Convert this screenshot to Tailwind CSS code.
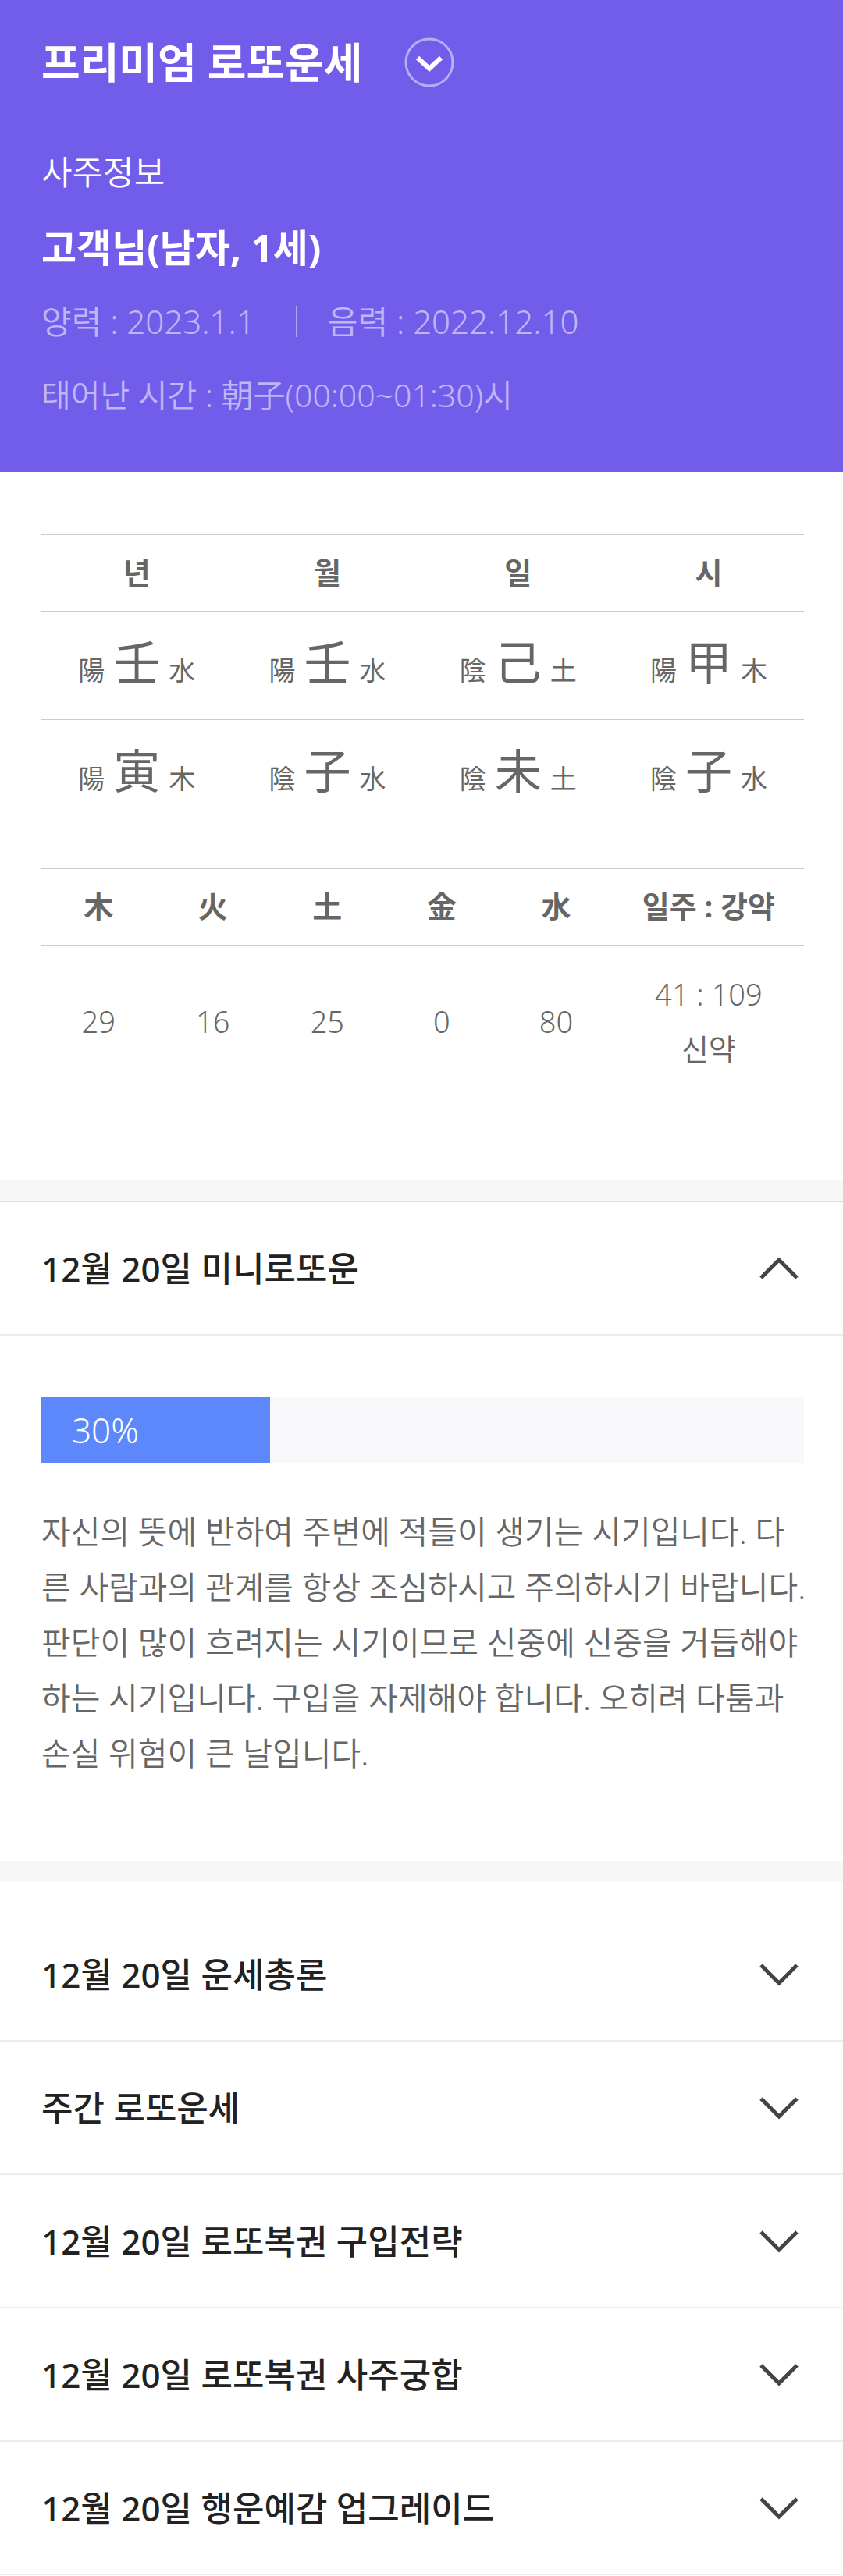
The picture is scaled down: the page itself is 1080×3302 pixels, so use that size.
<!DOCTYPE html>
<html lang="ko">
<head>
    <meta charset="UTF-8">
    <meta name="viewport" content="width=device-width, initial-scale=1.0">
    <title>프리미엄 로또운세</title>
    <script src="https://cdn.jsdelivr.net/npm/@tailwindcss/browser@4"></script>
    <style>
        body {
            font-family: 'Noto Sans', 'Noto Sans CJK KR', sans-serif;
        }
    </style>
</head>
<body class="bg-white text-[#666]">

    <header class="bg-[#715dea] text-white px-[53px] pt-11 pb-[52px]">
        <div class="flex items-center gap-[54px]">
            <h1 class="text-[54px] leading-[72px] font-bold">프리미엄 로또운세</h1>
            <button type="button" aria-label="메뉴 열기">
                <svg class="w-16 h-16" viewBox="0 0 64 64" fill="none" stroke="white">
                    <circle cx="32" cy="32" r="30" stroke-width="3" stroke-opacity="0.5"/>
                    <path d="M17 26 L32 40 L47 26" stroke-width="6"/>
                </svg>
            </button>
        </div>
        <h2 class="mt-[57px] text-[43px] leading-[96px] font-[350]">사주정보</h2>
        <p class="text-[49px] leading-[96px] font-bold">고객님(남자, 1세)</p>
        <div class="flex items-center text-[42px] leading-[94px] font-[350] text-white/55">
            <span>양력 : 2023.1.1</span>
            <span class="w-0.5 h-10 ml-[52px] mr-[39px] bg-white/45"></span>
            <span>음력 : 2022.12.10</span>
        </div>
        <p class="text-[41px] leading-[94px] font-[350] text-white/55">태어난 시간 : 朝子(00:00~01:30)시</p>
    </header>

    <main>
        <!-- 사주 표 -->
        <section class="pl-[53px] pr-[50px] pt-[79px] pb-[101px]">
            <table class="w-full table-fixed border-collapse text-center">
                <thead>
                    <tr class="h-[99px] border-y-2 border-[#ccc] text-[38px] leading-[70px]">
                        <th class="pb-1 font-bold">년</th>
                        <th class="pb-1 font-bold">월</th>
                        <th class="pb-1 font-bold">일</th>
                        <th class="pb-1 font-bold">시</th>
                    </tr>
                </thead>
                <tbody>
                    <tr class="h-[138px] border-b-2 border-[#ccc]">
                        <td class="pt-0.5"><div class="flex justify-center items-baseline gap-[11px] text-[34px] leading-[70px]"><span>陽</span><span class="text-[60px]">壬</span><span>水</span></div></td>
                        <td class="pt-0.5"><div class="flex justify-center items-baseline gap-[11px] text-[34px] leading-[70px]"><span>陽</span><span class="text-[60px]">壬</span><span>水</span></div></td>
                        <td class="pt-0.5"><div class="flex justify-center items-baseline gap-[11px] text-[34px] leading-[70px]"><span>陰</span><span class="text-[60px]">己</span><span>土</span></div></td>
                        <td class="pt-0.5"><div class="flex justify-center items-baseline gap-[11px] text-[34px] leading-[70px]"><span>陽</span><span class="text-[60px]">甲</span><span>木</span></div></td>
                    </tr>
                    <tr class="h-[138px]">
                        <td class="pt-0.5"><div class="flex justify-center items-baseline gap-[11px] text-[34px] leading-[70px]"><span>陽</span><span class="text-[60px]">寅</span><span>木</span></div></td>
                        <td class="pt-0.5"><div class="flex justify-center items-baseline gap-[11px] text-[34px] leading-[70px]"><span>陰</span><span class="text-[60px]">子</span><span>水</span></div></td>
                        <td class="pt-0.5"><div class="flex justify-center items-baseline gap-[11px] text-[34px] leading-[70px]"><span>陰</span><span class="text-[60px]">未</span><span>土</span></div></td>
                        <td class="pt-0.5"><div class="flex justify-center items-baseline gap-[11px] text-[34px] leading-[70px]"><span>陰</span><span class="text-[60px]">子</span><span>水</span></div></td>
                    </tr>
                </tbody>
            </table>

            <!-- 오행 점수 -->
            <table class="mt-[52px] w-full table-fixed border-collapse text-center text-[38px] leading-[70px]">
                <thead>
                    <tr class="h-[99px] border-y-2 border-[#ccc]">
                        <th class="w-[15%] pb-1 font-bold">木</th>
                        <th class="w-[15%] pb-1 font-bold">火</th>
                        <th class="w-[15%] pb-1 font-bold">土</th>
                        <th class="w-[15%] pb-1 font-bold">金</th>
                        <th class="w-[15%] pb-1 font-bold">水</th>
                        <th class="w-[25%] pb-1 font-bold">일주 : 강약</th>
                    </tr>
                </thead>
                <tbody class="font-[350]">
                    <tr class="h-[200px]">
                        <td class="pb-2">29</td>
                        <td class="pb-2">16</td>
                        <td class="pb-2">25</td>
                        <td class="pb-2">0</td>
                        <td class="pb-2">80</td>
                        <td class="pb-2">41 : 109<br>신약</td>
                    </tr>
                </tbody>
            </table>
        </section>

        <!-- 미니로또운 -->
        <section class="border-t-[26px] border-[#f7f7f7]">
            <h2 class="border-t-2 border-[#ddd]">
                <button type="button" aria-expanded="true" class="flex w-full h-[171px] items-center justify-between pl-[53px] pr-[50px] border-b-2 border-[#ededed] text-left text-[44px] leading-[70px] font-medium text-[#222]">
                    <span>12월 20일 미니로또운</span>
                    <svg class="w-16 h-16" viewBox="0 0 64 64" fill="none" stroke="#444" stroke-width="5"><path d="M9 44 L32 21 L55 44"/></svg>
                </button>
            </h2>
            <div class="pl-[53px] pr-[50px] pt-[79px] pb-[103px]">
                <div class="bg-[#f8f8fb]">
                    <div class="bg-[#5c88fb] pl-[39px] text-[44px] leading-[84px] font-[350] text-white" style="width: 30%">30%</div>
                </div>
                <p class="mt-[53px] -mr-2 text-[41px] leading-[71px] font-[350]">자신의 뜻에 반하여 주변에 적들이 생기는 시기입니다. 다른 사람과의 관계를 항상 조심하시고 주의하시기 바랍니다. 판단이 많이 흐려지는 시기이므로 신중에 신중을 거듭해야 하는 시기입니다. 구입을 자제해야 합니다. 오히려 다툼과 손실 위험이 큰 날입니다.</p>
            </div>
        </section>

        <!-- 운세 목록 -->
        <ul class="border-t-[26px] border-[#f7f7f7] pt-[34px] text-[44px] leading-[70px] font-medium text-[#222]">
            <li>
                <button type="button" aria-expanded="false" class="flex w-full h-[171px] items-center justify-between pl-[53px] pr-[50px] border-b-2 border-[#ededed] text-left">
                    <span>12월 20일 운세총론</span>
                    <svg class="w-16 h-16" viewBox="0 0 64 64" fill="none" stroke="#444" stroke-width="5"><path d="M9 20 L32 43 L55 20"/></svg>
                </button>
            </li>
            <li>
                <button type="button" aria-expanded="false" class="flex w-full h-[171px] items-center justify-between pl-[53px] pr-[50px] border-b-2 border-[#ededed] text-left">
                    <span>주간 로또운세</span>
                    <svg class="w-16 h-16" viewBox="0 0 64 64" fill="none" stroke="#444" stroke-width="5"><path d="M9 20 L32 43 L55 20"/></svg>
                </button>
            </li>
            <li>
                <button type="button" aria-expanded="false" class="flex w-full h-[171px] items-center justify-between pl-[53px] pr-[50px] border-b-2 border-[#ededed] text-left">
                    <span>12월 20일 로또복권 구입전략</span>
                    <svg class="w-16 h-16" viewBox="0 0 64 64" fill="none" stroke="#444" stroke-width="5"><path d="M9 20 L32 43 L55 20"/></svg>
                </button>
            </li>
            <li>
                <button type="button" aria-expanded="false" class="flex w-full h-[171px] items-center justify-between pl-[53px] pr-[50px] border-b-2 border-[#ededed] text-left">
                    <span>12월 20일 로또복권 사주궁합</span>
                    <svg class="w-16 h-16" viewBox="0 0 64 64" fill="none" stroke="#444" stroke-width="5"><path d="M9 20 L32 43 L55 20"/></svg>
                </button>
            </li>
            <li>
                <button type="button" aria-expanded="false" class="flex w-full h-[171px] items-center justify-between pl-[53px] pr-[50px] border-b-2 border-[#ededed] text-left">
                    <span>12월 20일 행운예감 업그레이드</span>
                    <svg class="w-16 h-16" viewBox="0 0 64 64" fill="none" stroke="#444" stroke-width="5"><path d="M9 20 L32 43 L55 20"/></svg>
                </button>
            </li>
        </ul>
    </main>

</body>
</html>
